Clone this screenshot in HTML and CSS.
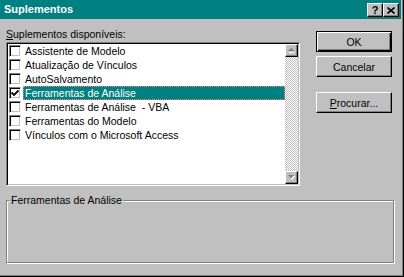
FILE: index.html
```html
<!DOCTYPE html>
<html lang="pt">
<head>
    <meta charset="UTF-8">
    <meta name="viewport" content="width=device-width, initial-scale=1.0">
    <title>Suplementos</title>
    <link rel="stylesheet" href="styles.css">
</head>
<body>
    <div class="dialog">
        <div class="titlebar">
            <span class="title">Suplementos</span>
            <div class="caption-buttons">
                <button class="caption-btn help">?</button>
                <button class="caption-btn close">
                    <svg width="8" height="7" viewBox="0 0 8 7"><path d="M0.5 0.5 L7.5 6.5 M7.5 0.5 L0.5 6.5" stroke="#000" stroke-width="1.6" fill="none"/></svg>
                </button>
            </div>
        </div>

        <div class="body">
            <div class="main">
                <div class="left">
                    <div class="label"><u>S</u>uplementos disponíveis:</div>
                    <div class="listbox">
                        <ul class="items">
                            <li><span class="check"></span><span class="name">Assistente de Modelo</span></li>
                            <li><span class="check"></span><span class="name">Atualização de Vínculos</span></li>
                            <li><span class="check"></span><span class="name">AutoSalvamento</span></li>
                            <li class="selected"><span class="check">
                                <svg width="8" height="8" viewBox="0 0 8 8"><path d="M0.5 3.5 L3 6 L7.5 1.5" stroke="#000" stroke-width="1.8" fill="none"/></svg>
                            </span><span class="name">Ferramentas de Análise</span></li>
                            <li><span class="check"></span><span class="name">Ferramentas de Análise &nbsp;- VBA</span></li>
                            <li><span class="check"></span><span class="name">Ferramentas do Modelo</span></li>
                            <li><span class="check"></span><span class="name">Vínculos com o Microsoft Access</span></li>
                        </ul>
                        <div class="scrollbar">
                            <div class="arrow">
                                <svg width="7" height="5" viewBox="0 0 7 5"><path d="M1 4 L6 4 L6 5 L1 5 Z" fill="#fff"/><path d="M0 3 L2.5 0.5 L3 0 L3.5 0 L6 3 Z" fill="#808080"/></svg>
                            </div>
                            <div class="track"></div>
                            <div class="arrow">
                                <svg width="7" height="5" viewBox="0 0 7 5"><path d="M1 1 L7 1 L4 5 Z" fill="#fff"/><path d="M0 0 L6 0 L3 3.5 Z" fill="#808080"/></svg>
                            </div>
                        </div>
                    </div>
                </div>

                <div class="actions">
                    <button class="btn default">OK</button>
                    <button class="btn">Cancelar</button>
                    <button class="btn browse"><u>P</u>rocurar...</button>
                </div>
            </div>

            <fieldset class="description">
                <legend>Ferramentas de Análise</legend>
            </fieldset>
        </div>
    </div>
</body>
</html>
```

FILE: styles.css
```css
/* janela inteira */
body {
    margin: 0;
    font-family: "Liberation Sans", Arial, sans-serif;
    font-size: 10.5px;
    color: #000;
}

.dialog {
    width: 404px; height: 277px;
    box-sizing: border-box;
    background: #c0c0c0;
    border-right: 1px solid #000;
    border-bottom: 1px solid #000;
    box-shadow: inset -1px -1px 0 #808080;
    padding-right: 1px;
    display: flex;
    flex-direction: column;
}

/* barra de titulo */
.titlebar {
    height: 19px;
    margin-right: 1px;
    background: #008080;
    display: flex;
    justify-content: space-between;
    padding: 0 2px 0 4px;
}

.title {
    color: #fff;
    font-weight: bold;
    font-size: 11px;
    line-height: 19px;
}

.caption-buttons {
    display: flex;
    margin-top: 3px;
}

.caption-btn {
    width: 16px; height: 14px;
    padding: 0;
    background: #c0c0c0;
    border: 1px solid;
    border-color: #fff #000 #000 #fff;
    box-shadow: inset -1px -1px 0 #808080;
    font-family: "Liberation Sans", Arial, sans-serif;
    font-weight: bold;
    font-size: 11px;
    line-height: 11px;
    display: flex;
    align-items: center;
    justify-content: center;
}

.close svg {
    display: block;
    margin-left: -1px;
}

/* conteudo */
.body {
    padding-left: 6px;
}

.main {
    display: flex;
}

.left {
    width: 294px;
    padding-top: 9px;
}

.label {
    line-height: 12px;
    margin-bottom: 2px;
}

/* lista com caixas de selecao */
.listbox {
    height: 144px;
    box-sizing: border-box;
    border: 1px solid;
    border-color: #808080 #fff #fff #808080;
    box-shadow: inset 1px 1px 0 #000, inset -1px -1px 0 #c0c0c0;
    padding: 1px;
    display: flex;
}

.items {
    flex: 1;
    margin: 0;
    padding: 0;
    list-style: none;
    background: #fff;
}

.items li {
    height: 14px;
    display: flex;
    align-items: center;
}

.check {
    width: 12px; height: 12px;
    box-sizing: border-box;
    margin-left: 1px;
    border: 1px solid;
    border-color: #808080 #fff #fff #808080;
    box-shadow: inset 1px 1px 0 #000, inset -1px -1px 0 #c0c0c0;
    background: #fff;
    display: flex;
    align-items: center;
    justify-content: center;
}

.check svg {
    display: block;
}

.name {
    flex: 1;
    margin-left: 2px;
    padding-left: 2px;
    line-height: 14px;
    white-space: nowrap;
}

.selected .name {
    background: #008080;
    color: #fff;
    outline: 1px dotted #ff7f7f;
    outline-offset: -1px;
}

/* barra de rolagem desativada */
.scrollbar {
    width: 13px;
    display: flex;
    flex-direction: column;
}

.track {
    flex: 1;
    background: repeating-conic-gradient(#fff 0 25%, #c0c0c0 0 50%) 0 0 / 2px 2px;
}

.arrow {
    height: 13px;
    box-sizing: border-box;
    background: #c0c0c0;
    border: 1px solid;
    border-color: #fff #000 #000 #fff;
    box-shadow: inset -1px -1px 0 #808080;
    display: flex;
    align-items: center;
    justify-content: center;
}

.arrow svg {
    display: block;
}

/* botoes da direita */
.actions {
    width: 76px;
    margin-left: 16px;
    padding-top: 12px;
    display: flex;
    flex-direction: column;
}

.btn {
    height: 21px;
    padding: 0;
    background: #c0c0c0;
    border: 1px solid;
    border-color: #fff #000 #000 #fff;
    box-shadow: inset -1px -1px 0 #808080;
    font-family: "Liberation Sans", Arial, sans-serif;
    font-size: 10.5px;
    color: #000;
    margin-bottom: 4px;
}

.btn.default {
    border-color: #000;
    box-shadow: inset 1px 1px 0 #fff, inset -1px -1px 0 #000, inset -2px -2px 0 #808080;
}

.btn.browse {
    margin-top: 11px;
}

/* caixa de descricao */
.description {
    width: 388px; height: 69px;
    box-sizing: border-box;
    margin: 8px 0 0 0;
    padding: 0 0 0 3px;
    border: 1px solid #808080;
    box-shadow: 1px 1px 0 #fff, inset 1px 1px 0 #fff;
}

.description legend {
    padding: 0 1px;
    line-height: 12px;
    background: #c0c0c0;
}
```
